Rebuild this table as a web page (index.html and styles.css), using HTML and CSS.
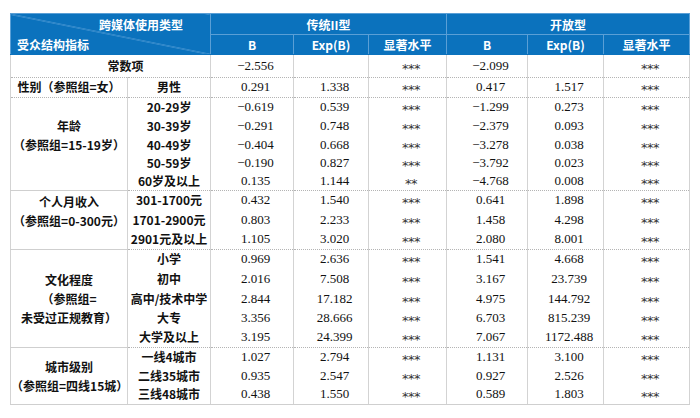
FILE: index.html
```html
<!DOCTYPE html>
<html lang="zh-CN">
<head>
<meta charset="utf-8">
<title>跨媒体使用类型</title>
<link rel="stylesheet" href="styles.css">
</head>
<body>
<table class="tbl">
  <colgroup>
    <col class="c1"><col class="c2"><col class="c3"><col class="c4"><col class="c5"><col class="c6"><col class="c7"><col class="c8">
  </colgroup>
  <thead>
    <tr class="h1">
      <th class="diag" rowspan="2" colspan="2">
        <div class="diag-in">
          <span class="diag-top">跨媒体使用类型</span>
          <span class="diag-bot">受众结构指标</span>
        </div>
      </th>
      <th colspan="3">传统II型</th>
      <th colspan="3">开放型</th>
    </tr>
    <tr class="h2">
      <th>B</th><th>Exp(B)</th><th>显著水平</th>
      <th>B</th><th>Exp(B)</th><th>显著水平</th>
    </tr>
  </thead>
  <tbody>
    <tr class="grp r23">
      <td class="lbl const" colspan="2">常数项</td>
      <td class="num">−2.556</td><td class="num"></td><td class="num"><span class="ast">***</span></td>
      <td class="num">−2.099</td><td class="num"></td><td class="num"><span class="ast">***</span></td>
    </tr>
    <tr class="grp r20">
      <td class="lbl">性别（参照组=女）</td><td class="lbl sub">男性</td>
      <td class="num">0.291</td><td class="num">1.338</td><td class="num"><span class="ast">***</span></td>
      <td class="num">0.417</td><td class="num">1.517</td><td class="num"><span class="ast">***</span></td>
    </tr>

    <tr class="grp r19">
      <td class="lbl" rowspan="5"><div class="glbl extra">年龄<br>（参照组=15-19岁）</div></td><td class="lbl sub">20-29岁</td>
      <td class="num">−0.619</td><td class="num">0.539</td><td class="num"><span class="ast">***</span></td>
      <td class="num">−1.299</td><td class="num">0.273</td><td class="num"><span class="ast">***</span></td>
    </tr>
    <tr class="r19">
      <td class="lbl sub">30-39岁</td>
      <td class="num">−0.291</td><td class="num">0.748</td><td class="num"><span class="ast">***</span></td>
      <td class="num">−2.379</td><td class="num">0.093</td><td class="num"><span class="ast">***</span></td>
    </tr>
    <tr class="r19">
      <td class="lbl sub">40-49岁</td>
      <td class="num">−0.404</td><td class="num">0.668</td><td class="num"><span class="ast">***</span></td>
      <td class="num">−3.278</td><td class="num">0.038</td><td class="num"><span class="ast">***</span></td>
    </tr>
    <tr class="r18">
      <td class="lbl sub">50-59岁</td>
      <td class="num">−0.190</td><td class="num">0.827</td><td class="num"><span class="ast">***</span></td>
      <td class="num">−3.792</td><td class="num">0.023</td><td class="num"><span class="ast">***</span></td>
    </tr>
    <tr class="r18">
      <td class="lbl sub">60岁及以上</td>
      <td class="num">0.135</td><td class="num">1.144</td><td class="num"><span class="ast">**</span></td>
      <td class="num">−4.768</td><td class="num">0.008</td><td class="num"><span class="ast">***</span></td>
    </tr>

    <tr class="grp r20">
      <td class="lbl" rowspan="3"><div class="glbl extra">个人月收入<br>（参照组=0-300元）</div></td><td class="lbl sub">301-1700元</td>
      <td class="num">0.432</td><td class="num">1.540</td><td class="num"><span class="ast">***</span></td>
      <td class="num">0.641</td><td class="num">1.898</td><td class="num"><span class="ast">***</span></td>
    </tr>
    <tr class="r20">
      <td class="lbl sub">1701-2900元</td>
      <td class="num">0.803</td><td class="num">2.233</td><td class="num"><span class="ast">***</span></td>
      <td class="num">1.458</td><td class="num">4.298</td><td class="num"><span class="ast">***</span></td>
    </tr>
    <tr class="r19">
      <td class="lbl sub">2901元及以上</td>
      <td class="num">1.105</td><td class="num">3.020</td><td class="num"><span class="ast">***</span></td>
      <td class="num">2.080</td><td class="num">8.001</td><td class="num"><span class="ast">***</span></td>
    </tr>

    <tr class="grp r20">
      <td class="lbl" rowspan="5"><div class="glbl">文化程度<br>（参照组=<br>未受过正规教育）</div></td><td class="lbl sub">小学</td>
      <td class="num">0.969</td><td class="num">2.636</td><td class="num"><span class="ast">***</span></td>
      <td class="num">1.541</td><td class="num">4.668</td><td class="num"><span class="ast">***</span></td>
    </tr>
    <tr class="r20">
      <td class="lbl sub">初中</td>
      <td class="num">2.016</td><td class="num">7.508</td><td class="num"><span class="ast">***</span></td>
      <td class="num">3.167</td><td class="num">23.739</td><td class="num"><span class="ast">***</span></td>
    </tr>
    <tr class="r19">
      <td class="lbl sub">高中/技术中学</td>
      <td class="num">2.844</td><td class="num">17.182</td><td class="num"><span class="ast">***</span></td>
      <td class="num">4.975</td><td class="num">144.792</td><td class="num"><span class="ast">***</span></td>
    </tr>
    <tr class="r19">
      <td class="lbl sub">大专</td>
      <td class="num">3.356</td><td class="num">28.666</td><td class="num"><span class="ast">***</span></td>
      <td class="num">6.703</td><td class="num">815.239</td><td class="num"><span class="ast">***</span></td>
    </tr>
    <tr class="r20">
      <td class="lbl sub">大学及以上</td>
      <td class="num">3.195</td><td class="num">24.399</td><td class="num"><span class="ast">***</span></td>
      <td class="num">7.067</td><td class="num">1172.488</td><td class="num"><span class="ast">***</span></td>
    </tr>

    <tr class="grp r19">
      <td class="lbl" rowspan="3"><div class="glbl">城市级别<br>（参照组=四线15城）</div></td><td class="lbl sub">一线4城市</td>
      <td class="num">1.027</td><td class="num">2.794</td><td class="num"><span class="ast">***</span></td>
      <td class="num">1.131</td><td class="num">3.100</td><td class="num"><span class="ast">***</span></td>
    </tr>
    <tr class="r19">
      <td class="lbl sub">二线35城市</td>
      <td class="num">0.935</td><td class="num">2.547</td><td class="num"><span class="ast">***</span></td>
      <td class="num">0.927</td><td class="num">2.526</td><td class="num"><span class="ast">***</span></td>
    </tr>
    <tr class="r19 last">
      <td class="lbl sub">三线48城市</td>
      <td class="num">0.438</td><td class="num">1.550</td><td class="num"><span class="ast">***</span></td>
      <td class="num">0.589</td><td class="num">1.803</td><td class="num"><span class="ast">***</span></td>
    </tr>
  </tbody>
</table>
</body>
</html>
```

FILE: styles.css
```css
html, body {
  margin: 0;
  padding: 0;
  background: #ffffff;
}

body {
  font-family: "Noto Sans CJK SC", "Noto Sans", sans-serif;
  font-size: 12px;
  color: #111;
}

.tbl {
  margin: 13px 0 0 10px;
  border-collapse: collapse;
  table-layout: fixed;
  width: 680px;
}

.c1 { width: 117px; }
.c2 { width: 83px; }
.c3 { width: 83px; }
.c4 { width: 75px; }
.c5 { width: 78px; }
.c6 { width: 81px; }
.c7 { width: 76px; }
.c8 { width: 86px; }

th {
  background: #0b72bd;
  color: #ffffff;
  font-weight: 700;
  font-size: 12px;
  line-height: 15px;
  padding: 0;
  text-align: center;
  vertical-align: middle;
  border: 1px solid #5a9fd6;
}

.h1 { height: 21px; }
.h2 { height: 20px; }
.h2 th { border-bottom-color: #0b72bd; }

.diag {
  background: linear-gradient(to top right, #0b72bd calc(50% - 0.7px), #6aaade 50%, #0b72bd calc(50% + 0.7px));
  border-bottom-color: #0b72bd;
  text-align: left;
}

.diag-in {
  display: flex;
  flex-direction: column;
  justify-content: space-between;
  height: 38px;
}

.diag-top {
  align-self: flex-end;
  padding: 2px 27px 0 0;
}

.diag-bot {
  align-self: flex-start;
  padding: 0 0 1px 6px;
}

td {
  padding: 0 0 2px 0;
  border-left: 1px solid #d3d3d3;
  border-right: 1px solid #d3d3d3;
  text-align: center;
  vertical-align: middle;
  line-height: 15px;
  white-space: nowrap;
}

.grp td { border-top: 1px dotted #b4b4b4; }
.last td { border-bottom: 1px solid #cfcfcf; }
td[rowspan] { border-bottom: 1px solid #cfcfcf; padding-bottom: 0; }

.r23 { height: 23px; }
.r20 { height: 20px; }
.r19 { height: 19px; }
.r18 { height: 18px; }

.lbl {
  font-weight: 700;
  color: #111;
  font-size: 12px;
}

.const { padding-left: 30px; }

.glbl { line-height: 19px; }
.glbl.extra { padding-bottom: 19px; }

.num {
  font-family: "Liberation Serif", "Times New Roman", serif;
  font-size: 13px;
  color: #111;
  padding-left: 7px;
}

.ast {
  font-family: "DejaVu Sans", sans-serif;
  font-size: 13px;
  letter-spacing: -0.5px;
  color: #333;
  line-height: 0;
  vertical-align: -3px;
}
```
